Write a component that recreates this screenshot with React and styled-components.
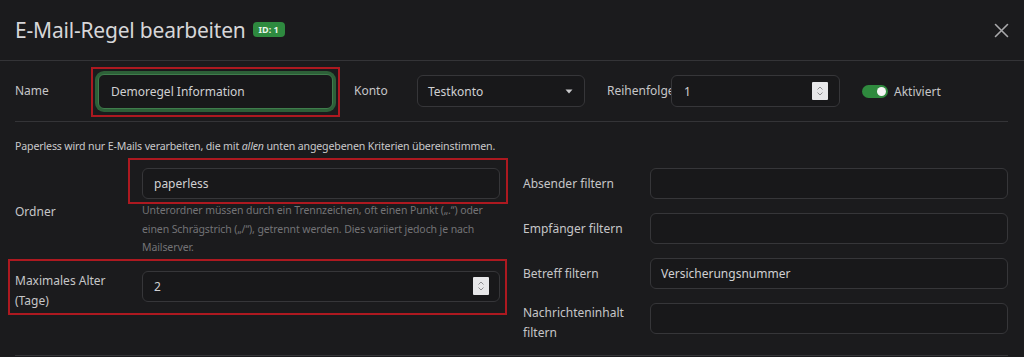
import React from "react";
import styled, { createGlobalStyle } from "styled-components";

const Global = createGlobalStyle`
  html, body { margin: 0; padding: 0; background: #1b1b1d; }
  body { font-family: "Noto Sans", "Open Sans", sans-serif; color: #c9c9cb; }
  * { box-sizing: border-box; }
`;

const Modal = styled.div`
  width: 1024px;
  height: 357px;
  overflow: hidden;
  background: #1b1b1d;
`;

const Header = styled.div`
  height: 61px;
  display: flex;
  align-items: center;
  padding: 0 14px 0 15px;
  border-bottom: 1px solid #343437;
`;

const Title = styled.h1`
  margin: 0;
  font-size: 21px;
  font-weight: 400;
  color: #d6d6d8;
  letter-spacing: -0.2px;
`;

const Badge = styled.span`
  margin-left: 7px;
  background: #2e8a3f;
  color: #e8f5ea;
  font-size: 9px;
  font-weight: 700;
  border-radius: 4px;
  padding: 1px 6px;
  line-height: 13px;
  position: relative;
  top: -1px;
`;

const Close = styled.button`
  margin-left: auto;
  background: none;
  border: 0;
  padding: 0;
  width: 18px;
  height: 18px;
  display: flex;
  align-items: center;
  justify-content: center;
  cursor: pointer;
`;

const Body = styled.div`
  padding: 0 16px 0 15px;
`;

const TopRow = styled.div`
  height: 61px;
  display: flex;
  align-items: center;
  border-bottom: 1px solid #343437;
`;

const Label = styled.label`
  flex: none;
  width: ${(p) => p.$w || 127}px;
  font-size: 12px;
  line-height: 20px;
  color: #c6c6c8;
  white-space: ${(p) => (p.$nowrap ? "nowrap" : "normal")};
`;

const Highlight = styled.div`
  position: relative;
  flex: ${(p) => (p.$fill ? "1" : "none")};
  &::after {
    content: "";
    position: absolute;
    top: ${(p) => p.$t}px;
    right: ${(p) => p.$r}px;
    bottom: ${(p) => p.$b}px;
    left: ${(p) => p.$l}px;
    border: 2px solid #ad1920;
    pointer-events: none;
  }
`;

const InputBox = styled.div`
  position: relative;
  display: flex;
  align-items: center;
  flex: ${(p) => (p.$w ? "none" : "1")};
  min-width: 0;
  width: ${(p) => (p.$w ? `${p.$w}px` : "auto")};
  height: ${(p) => p.$h || 31}px;
  padding: 0 ${(p) => p.$pr || 10}px 0 ${(p) => p.$pl || 10}px;
  border: 1px solid ${(p) => (p.$focus ? "#3f7d4c" : "#363639")};
  box-shadow: ${(p) => (p.$focus ? "0 0 0 3px rgba(52, 120, 66, 0.75)" : "none")};
  border-radius: 6px;
  background: #18181a;
  font-size: 12px;
  color: #d0d0d2;
`;

const Value = styled.span`
  flex: 1;
  white-space: nowrap;
`;

const Spinner = styled.span`
  width: 16px;
  height: 18px;
  background: #e7e7e9;
  border-radius: 1px;
  display: flex;
  align-items: center;
  justify-content: center;
  flex: none;
`;

const Toggle = styled.span`
  width: 26px;
  height: 13px;
  border-radius: 7px;
  background: #2f8a3e;
  position: relative;
  flex: none;
  &::after {
    content: "";
    position: absolute;
    right: 2px;
    top: 2px;
    width: 9px;
    height: 9px;
    border-radius: 50%;
    background: #f4f4f4;
  }
`;

const ToggleText = styled.span`
  margin-left: 6px;
  font-size: 12px;
  color: #c6c6c8;
`;

const Intro = styled.p`
  margin: 0;
  padding: 15px 0 0;
  font-size: 10.6px;
  line-height: 18px;
  color: #c9c9cb;
  letter-spacing: -0.15px;
  em { font-style: italic; }
`;

const Columns = styled.div`
  display: grid;
  grid-template-columns: 485px 1fr;
  column-gap: 23px;
  margin-top: 13px;
`;

const Column = styled.div`
  display: flex;
  flex-direction: column;
  gap: ${(p) => p.$gap || 0}px;
`;

const FieldRow = styled.div`
  display: flex;
  align-items: ${(p) => (p.$top ? "flex-start" : "center")};
  min-height: 31px;
`;

const Field = styled.div`
  flex: 1;
  min-width: 0;
  display: flex;
  flex-direction: column;
`;

const Help = styled.div`
  margin-top: 2px;
  font-size: 10.5px;
  line-height: 18.5px;
  color: #737376;
  white-space: nowrap;
  letter-spacing: -0.1px;
`;

const Divider = styled.div`
  margin-top: 12px;
  border-bottom: 1px solid #343437;
`;

const SpinIcon = () => (
  <svg width="8" height="12" viewBox="0 0 8 12" fill="none" stroke="#8d8d90" strokeWidth="1">
    <path d="M1.5 4.5 L4 2 L6.5 4.5" />
    <path d="M1.5 7.5 L4 10 L6.5 7.5" />
  </svg>
);

const Caret = () => (
  <svg width="8" height="5" viewBox="0 0 8 5">
    <path d="M0.5 0.5 L7.5 0.5 L4 4.5 Z" fill="#c8c8ca" />
  </svg>
);

export default function App() {
  return (
    <>
      <Global />
      <Modal>
        <Header>
          <Title>E-Mail-Regel bearbeiten</Title>
          <Badge>ID: 1</Badge>
          <Close aria-label="Schließen">
            <svg width="15" height="15" viewBox="0 0 15 15" stroke="#a9a9ab" strokeWidth="1.6" strokeLinecap="round">
              <path d="M1.5 1.5 L13.5 13.5 M13.5 1.5 L1.5 13.5" />
            </svg>
          </Close>
        </Header>
        <Body>
          <TopRow>
            <Label $w={83}>Name</Label>
            <Highlight $t={-7} $r={-7} $b={-8} $l={-7}>
              <InputBox $w={235} $h={35} $pl={12} $focus>
                <Value>Demoregel Information</Value>
              </InputBox>
            </Highlight>
            <Label $w={63} style={{ marginLeft: 21 }}>Konto</Label>
            <InputBox $w={168} $h={32} $pr={11}>
              <Value>Testkonto</Value>
              <Caret />
            </InputBox>
            <Label $w={64} $nowrap style={{ marginLeft: 22 }}>Reihenfolge</Label>
            <InputBox $w={169} $h={32} $pl={12} $pr={11}>
              <Value>1</Value>
              <Spinner>
                <SpinIcon />
              </Spinner>
            </InputBox>
            <Toggle style={{ marginLeft: 22 }} />
            <ToggleText>Aktiviert</ToggleText>
          </TopRow>
          <Intro>
            Paperless wird nur E-Mails verarbeiten, die mit <em>allen</em> unten angegebenen Kriterien übereinstimmen.
          </Intro>
          <Columns>
            <Column $gap={14}>
              <FieldRow>
                <Label>Ordner</Label>
                <Field>
                  <Highlight $t={-10} $r={-8} $b={-5} $l={-14}>
                    <InputBox $pl={11}>
                      <Value>paperless</Value>
                    </InputBox>
                  </Highlight>
                  <Help>
                    Unterordner müssen durch ein Trennzeichen, oft einen Punkt („.“) oder
                    <br />
                    einen Schrägstrich („/“), getrennt werden. Dies variiert jedoch je nach
                    <br />
                    Mailserver.
                  </Help>
                </Field>
              </FieldRow>
              <Highlight $t={-12} $r={-7} $b={-4} $l={-7}>
                <FieldRow $top>
                  <Label>
                    Maximales Alter
                    <br />
                    (Tage)
                  </Label>
                  <InputBox $pl={11} $pr={10}>
                    <Value>2</Value>
                    <Spinner>
                      <SpinIcon />
                    </Spinner>
                  </InputBox>
                </FieldRow>
              </Highlight>
            </Column>
            <Column $gap={14}>
              <FieldRow>
                <Label>Absender filtern</Label>
                <InputBox />
              </FieldRow>
              <FieldRow>
                <Label>Empfänger filtern</Label>
                <InputBox />
              </FieldRow>
              <FieldRow>
                <Label>Betreff filtern</Label>
                <InputBox>
                  <Value>Versicherungsnummer</Value>
                </InputBox>
              </FieldRow>
              <FieldRow $top>
                <Label>
                  Nachrichteninhalt
                  <br />
                  filtern
                </Label>
                <InputBox />
              </FieldRow>
            </Column>
          </Columns>
          <Divider />
        </Body>
      </Modal>
    </>
  );
}
